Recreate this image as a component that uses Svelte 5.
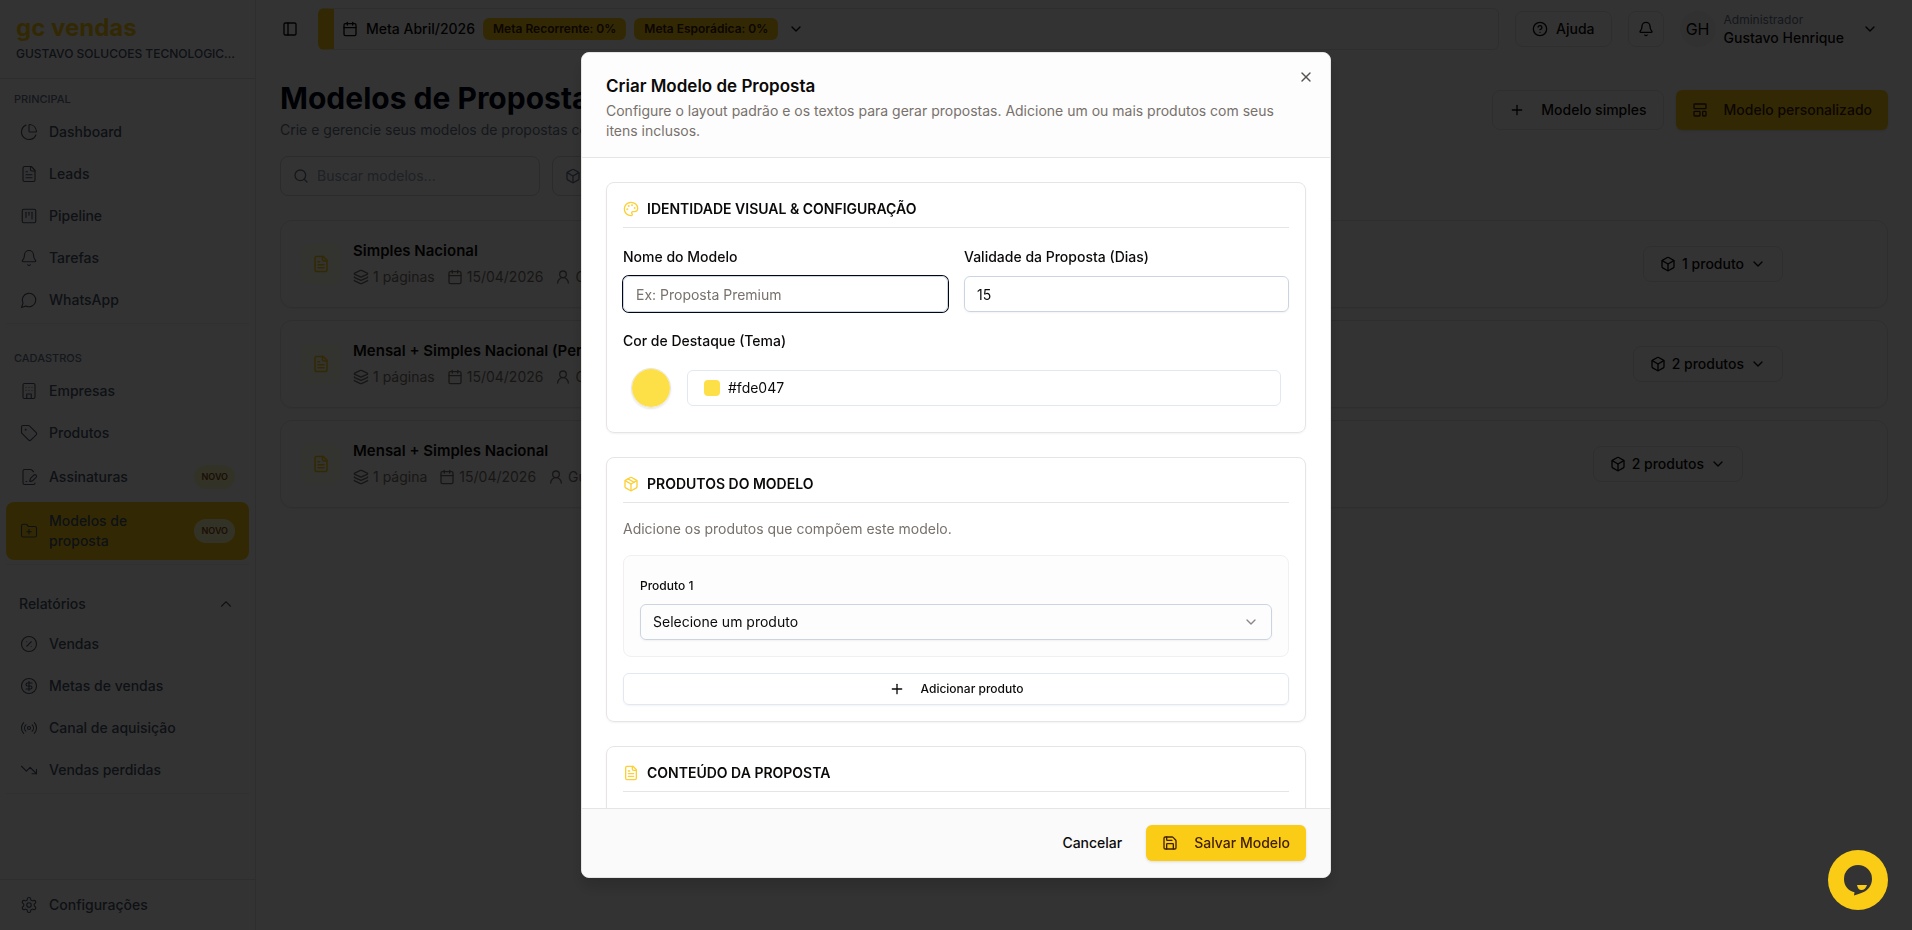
<script lang="ts">
  interface NavItem {
    label: string;
    icon: string;
    badge?: boolean;
    active?: boolean;
  }

  interface Template {
    name: string;
    pages: string;
    date: string;
    author: string;
    products: string;
    actions: string[];
  }

  const icons: Record<string, string> = {
    pie: '<path d="M21 12c.552 0 1.005-.449.95-.998a10 10 0 0 0-8.953-8.951c-.55-.055-.998.398-.998.95v8a1 1 0 0 0 1 1z"/><path d="M21.21 15.89A10 10 0 1 1 8 2.83"/>',
    file: '<path d="M15 2H6a2 2 0 0 0-2 2v16a2 2 0 0 0 2 2h12a2 2 0 0 0 2-2V7Z"/><path d="M14 2v4a2 2 0 0 0 2 2h4"/><path d="M10 9H8"/><path d="M16 13H8"/><path d="M16 17H8"/>',
    kanban: '<rect width="18" height="18" x="3" y="3" rx="2"/><path d="M8 7v7"/><path d="M12 7v4"/><path d="M16 7v9"/>',
    bell: '<path d="M10.268 21a2 2 0 0 0 3.464 0"/><path d="M3.262 15.326A1 1 0 0 0 4 17h16a1 1 0 0 0 .74-1.673C19.41 13.956 18 12.499 18 8A6 6 0 0 0 6 8c0 4.499-1.411 5.956-2.738 7.326"/>',
    message: '<path d="M7.9 20A9 9 0 1 0 4 16.1L2 22Z"/>',
    building: '<rect width="16" height="20" x="4" y="2" rx="2"/><path d="M9 22v-6h6v6"/><path d="M8 7h.01M12 7h.01M16 7h.01M8 11h.01M12 11h.01M16 11h.01"/>',
    tag: '<path d="M12.586 2.586A2 2 0 0 0 11.172 2H4a2 2 0 0 0-2 2v7.172a2 2 0 0 0 .586 1.414l8.704 8.704a2.426 2.426 0 0 0 3.42 0l6.58-6.58a2.426 2.426 0 0 0 0-3.42z"/><circle cx="7.5" cy="7.5" r=".5" fill="currentColor"/>',
    filePen: '<path d="m18 5-2.414-2.414A2 2 0 0 0 14.172 2H6a2 2 0 0 0-2 2v16a2 2 0 0 0 2 2h12a2 2 0 0 0 2-2"/><path d="M21.378 12.626a1 1 0 0 0-3.004-3.004l-4.01 4.012a2 2 0 0 0-.506.854l-.837 2.87a.5.5 0 0 0 .62.62l2.87-.837a2 2 0 0 0 .854-.506z"/><path d="M8 18h1"/>',
    folderPlus: '<path d="M12 10v6"/><path d="M9 13h6"/><path d="M20 20a2 2 0 0 0 2-2V8a2 2 0 0 0-2-2h-7.9a2 2 0 0 1-1.69-.9L9.6 3.9A2 2 0 0 0 7.93 3H4a2 2 0 0 0-2 2v13a2 2 0 0 0 2 2Z"/>',
    percent: '<circle cx="12" cy="12" r="10"/><path d="m15 9-6 6"/><path d="M9 9h.01"/><path d="M15 15h.01"/>',
    dollar: '<circle cx="12" cy="12" r="10"/><path d="M16 8h-6a2 2 0 1 0 0 4h4a2 2 0 1 1 0 4H8"/><path d="M12 18V6"/>',
    radio: '<path d="M4.9 19.1C1 15.2 1 8.8 4.9 4.9"/><path d="M7.8 16.2c-2.3-2.3-2.3-6.1 0-8.5"/><circle cx="12" cy="12" r="2"/><path d="M16.2 7.8c2.3 2.3 2.3 6.1 0 8.5"/><path d="M19.1 4.9C23 8.8 23 15.1 19.1 19"/>',
    trendDown: '<path d="M16 17h6v-6"/><path d="m22 17-8.5-8.5-5 5L2 7"/>',
    settings: '<path d="M12.22 2h-.44a2 2 0 0 0-2 2v.18a2 2 0 0 1-1 1.73l-.43.25a2 2 0 0 1-2 0l-.15-.08a2 2 0 0 0-2.73.73l-.22.38a2 2 0 0 0 .73 2.73l.15.1a2 2 0 0 1 1 1.72v.51a2 2 0 0 1-1 1.74l-.15.09a2 2 0 0 0-.73 2.73l.22.38a2 2 0 0 0 2.73.73l.15-.08a2 2 0 0 1 2 0l.43.25a2 2 0 0 1 1 1.73V20a2 2 0 0 0 2 2h.44a2 2 0 0 0 2-2v-.18a2 2 0 0 1 1-1.73l.43-.25a2 2 0 0 1 2 0l.15.08a2 2 0 0 0 2.73-.73l.22-.39a2 2 0 0 0-.73-2.73l-.15-.08a2 2 0 0 1-1-1.74v-.5a2 2 0 0 1 1-1.74l.15-.09a2 2 0 0 0 .73-2.73l-.22-.38a2 2 0 0 0-2.73-.73l-.15.08a2 2 0 0 1-2 0l-.43-.25a2 2 0 0 1-1-1.73V4a2 2 0 0 0-2-2z"/><circle cx="12" cy="12" r="3"/>',
    panel: '<rect width="18" height="18" x="3" y="3" rx="2"/><path d="M9 3v18"/>',
    calendar: '<path d="M8 2v4"/><path d="M16 2v4"/><rect width="18" height="18" x="3" y="4" rx="2"/><path d="M3 10h18"/>',
    chevronDown: '<path d="m6 9 6 6 6-6"/>',
    chevronUp: '<path d="m18 15-6-6-6 6"/>',
    help: '<circle cx="12" cy="12" r="10"/><path d="M9.09 9a3 3 0 0 1 5.83 1c0 2-3 3-3 3"/><path d="M12 17h.01"/>',
    plus: '<path d="M5 12h14"/><path d="M12 5v14"/>',
    template: '<rect width="18" height="7" x="3" y="3" rx="1"/><rect width="9" height="7" x="3" y="14" rx="1"/><rect width="5" height="7" x="16" y="14" rx="1"/>',
    box: '<path d="M21 8a2 2 0 0 0-1-1.73l-7-4a2 2 0 0 0-2 0l-7 4A2 2 0 0 0 3 8v8a2 2 0 0 0 1 1.73l7 4a2 2 0 0 0 2 0l7-4A2 2 0 0 0 21 16Z"/><path d="m3.3 7 8.7 5 8.7-5"/><path d="M12 22V12"/>',
    package: '<path d="M21 8a2 2 0 0 0-1-1.73l-7-4a2 2 0 0 0-2 0l-7 4A2 2 0 0 0 3 8v8a2 2 0 0 0 1 1.73l7 4a2 2 0 0 0 2 0l7-4A2 2 0 0 0 21 16Z"/><path d="m3.3 7 8.7 5 8.7-5"/><path d="M12 22V12"/><path d="m7.5 4.27 9 5.15"/>',
    layers: '<path d="M12.83 2.18a2 2 0 0 0-1.66 0L2.6 6.08a1 1 0 0 0 0 1.83l8.58 3.91a2 2 0 0 0 1.66 0l8.58-3.9a1 1 0 0 0 0-1.83z"/><path d="M2 12a1 1 0 0 0 .58.91l8.6 3.91a2 2 0 0 0 1.65 0l8.58-3.9A1 1 0 0 0 22 12"/><path d="M2 17a1 1 0 0 0 .58.91l8.6 3.91a2 2 0 0 0 1.65 0l8.58-3.9A1 1 0 0 0 22 17"/>',
    user: '<circle cx="12" cy="8" r="5"/><path d="M20 21a8 8 0 0 0-16 0"/>',
    search: '<circle cx="11" cy="11" r="8"/><path d="m21 21-4.3-4.3"/>',
    palette: '<path d="M12 22a1 1 0 0 1 0-20 10 9 0 0 1 10 9 5 5 0 0 1-5 5h-2.25a1.75 1.75 0 0 0-1.4 2.8l.3.4a1.75 1.75 0 0 1-1.4 2.8z"/><circle cx="13.5" cy="6.5" r=".5" fill="currentColor"/><circle cx="17.5" cy="10.5" r=".5" fill="currentColor"/><circle cx="6.5" cy="12.5" r=".5" fill="currentColor"/><circle cx="8.5" cy="7.5" r=".5" fill="currentColor"/>',
    save: '<path d="M15.2 3a2 2 0 0 1 1.4.6l3.8 3.8a2 2 0 0 1 .6 1.4V19a2 2 0 0 1-2 2H5a2 2 0 0 1-2-2V5a2 2 0 0 1 2-2z"/><path d="M17 21v-7a1 1 0 0 0-1-1H8a1 1 0 0 0-1 1v7"/><path d="M7 3v4a1 1 0 0 0 1 1h7"/>',
    close: '<path d="M18 6 6 18"/><path d="m6 6 12 12"/>'
  };

  const mainNav: NavItem[] = [
    { label: 'Dashboard', icon: 'pie' },
    { label: 'Leads', icon: 'file' },
    { label: 'Pipeline', icon: 'kanban' },
    { label: 'Tarefas', icon: 'bell' },
    { label: 'WhatsApp', icon: 'message' }
  ];

  const recordsNav: NavItem[] = [
    { label: 'Empresas', icon: 'building' },
    { label: 'Produtos', icon: 'tag' },
    { label: 'Assinaturas', icon: 'filePen', badge: true },
    { label: 'Modelos de proposta', icon: 'folderPlus', badge: true, active: true }
  ];

  const reportsNav: NavItem[] = [
    { label: 'Vendas', icon: 'percent' },
    { label: 'Metas de vendas', icon: 'dollar' },
    { label: 'Canal de aquisição', icon: 'radio' },
    { label: 'Vendas perdidas', icon: 'trendDown' }
  ];

  const templates: Template[] = [
    { name: 'Simples Nacional', pages: '1 páginas', date: '15/04/2026', author: 'Gustavo', products: '1 produto', actions: ['filePen', 'close'] },
    { name: 'Mensal + Simples Nacional (Personalizado)', pages: '1 páginas', date: '15/04/2026', author: 'Gustavo', products: '2 produtos', actions: ['filePen', 'close'] },
    { name: 'Mensal + Simples Nacional', pages: '1 página', date: '15/04/2026', author: 'Gustavo', products: '2 produtos', actions: ['file', 'filePen', 'close'] }
  ];

  let modelName = $state('');
  let validity = $state('15');
  let themeColor = $state('#fde047');
  let product = $state('');
</script>

{#snippet icon(name: string, size = 16, stroke = 2)}
  <svg width={size} height={size} viewBox="0 0 24 24" fill="none" stroke="currentColor" stroke-width={stroke} stroke-linecap="round" stroke-linejoin="round" aria-hidden="true">
    {@html icons[name]}
  </svg>
{/snippet}

{#snippet navList(items: NavItem[])}
  <ul class="nav-list">
    {#each items as item}
      <li>
        <a href="#nav" class="nav-item" class:active={item.active}>
          {@render icon(item.icon, 18, 1.5)}
          <span class="nav-label">{item.label}</span>
          {#if item.badge}<span class="novo">NOVO</span>{/if}
        </a>
      </li>
    {/each}
  </ul>
{/snippet}

<div class="app">
  <aside class="sidebar">
    <div class="brand">
      <div class="logo">gc vendas</div>
      <div class="company">GUSTAVO SOLUCOES TECNOLOGICAS LTDA</div>
    </div>

    <nav class="nav">
      <div class="group">
        <h2 class="group-title">PRINCIPAL</h2>
        {@render navList(mainNav)}
      </div>
      <div class="group records">
        <h2 class="group-title">CADASTROS</h2>
        {@render navList(recordsNav)}
      </div>
      <div class="group reports">
        <button class="reports-toggle">Relatórios {@render icon('chevronUp', 18, 1.5)}</button>
        {@render navList(reportsNav)}
      </div>
    </nav>

    <div class="sidebar-footer">
      <a href="#config" class="nav-item">
        {@render icon('settings', 18, 1.5)}
        <span class="nav-label">Configurações</span>
      </a>
    </div>
  </aside>

  <div class="page">
    <header class="topbar">
      <button class="toggle" aria-label="Recolher menu">{@render icon('panel')}</button>
      <div class="goal">
        {@render icon('calendar')}
        <span class="goal-name">Meta Abril/2026</span>
        <span class="goal-badge">Meta Recorrente: 0%</span>
        <span class="goal-badge">Meta Esporádica: 0%</span>
        <span class="goal-arrow">{@render icon('chevronDown')}</span>
      </div>
      <button class="outline help">{@render icon('help')} Ajuda</button>
      <button class="outline square" aria-label="Notificações">{@render icon('bell')}</button>
      <button class="user">
        <span class="avatar">GH</span>
        <span class="user-text">
          <span class="role">Administrador</span>
          <span class="user-name">Gustavo Henrique</span>
        </span>
        {@render icon('chevronDown')}
      </button>
    </header>

    <main class="content">
      <div class="heading">
        <div>
          <h1>Modelos de Proposta</h1>
          <p>Crie e gerencie seus modelos de propostas comerciais.</p>
        </div>
        <div class="heading-actions">
          <button class="outline large">{@render icon('plus')} Modelo simples</button>
          <button class="primary large">{@render icon('template')} Modelo personalizado</button>
        </div>
      </div>

      <div class="filters">
        <label class="search">
          {@render icon('search')}
          <input type="text" placeholder="Buscar modelos..." aria-label="Buscar modelos" />
        </label>
        <button class="filter">{@render icon('box')} Todos os produtos</button>
      </div>

      <div class="templates">
        {#each templates as template}
          <article class="template">
            <span class="tile">{@render icon('file', 18)}</span>
            <div class="template-info">
              <h3>{template.name}</h3>
              <div class="meta">
                <span>{@render icon('layers')} {template.pages}</span>
                <span>{@render icon('calendar')} {template.date}</span>
                <span>{@render icon('user')} {template.author}</span>
              </div>
            </div>
            <button class="outline products">
              {@render icon('box')} {template.products} {@render icon('chevronDown')}
            </button>
            <!-- shown on hover -->
            <div class="row-actions">
              {#each template.actions as action}
                <button aria-label="Ação">{@render icon(action)}</button>
              {/each}
            </div>
          </article>
        {/each}
      </div>
    </main>
  </div>
</div>

<div class="overlay">
  <div class="modal" role="dialog" aria-modal="true" aria-labelledby="modal-title">
    <header class="modal-header">
      <h2 id="modal-title">Criar Modelo de Proposta</h2>
      <p>Configure o layout padrão e os textos para gerar propostas. Adicione um ou mais produtos com seus itens inclusos.</p>
      <button class="close" aria-label="Fechar">{@render icon('close')}</button>
    </header>

    <div class="modal-body">
      <section class="panel">
        <h3 class="panel-title">{@render icon('palette')} IDENTIDADE VISUAL &amp; CONFIGURAÇÃO</h3>
        <div class="columns">
          <div class="field">
            <label for="model-name">Nome do Modelo</label>
            <input id="model-name" class="input focused" type="text" placeholder="Ex: Proposta Premium" bind:value={modelName} />
          </div>
          <div class="field">
            <label for="validity">Validade da Proposta (Dias)</label>
            <input id="validity" class="input" type="text" inputmode="numeric" bind:value={validity} />
          </div>
        </div>
        <div class="field">
          <label for="theme">Cor de Destaque (Tema)</label>
          <div class="color-row">
            <input id="theme" class="color-circle" type="color" bind:value={themeColor} />
            <div class="color-box">
              <span class="swatch" style="background: {themeColor}"></span>
              <input type="text" aria-label="Código da cor" bind:value={themeColor} />
            </div>
          </div>
        </div>
      </section>

      <section class="panel">
        <h3 class="panel-title">{@render icon('package')} PRODUTOS DO MODELO</h3>
        <p class="hint">Adicione os produtos que compõem este modelo.</p>
        <div class="product">
          <div class="field">
            <label class="small" for="product">Produto 1</label>
            <div class="select-wrap">
              <select id="product" class="input" bind:value={product}>
                <option value="">Selecione um produto</option>
              </select>
              {@render icon('chevronDown')}
            </div>
          </div>
        </div>
        <button class="add">{@render icon('plus')} Adicionar produto</button>
      </section>

      <section class="panel">
        <h3 class="panel-title">{@render icon('file')} CONTEÚDO DA PROPOSTA</h3>
        <div class="field"></div>
      </section>
    </div>

    <footer class="modal-footer">
      <button class="ghost">Cancelar</button>
      <button class="primary save">{@render icon('save')} Salvar Modelo</button>
    </footer>
  </div>
</div>

<button class="chat" aria-label="Abrir chat">
  <svg width="32" height="32" viewBox="0 0 32 32" aria-hidden="true">
    <path d="M16 1a14 14 0 0 1 14 14c0 7-5 12.500-12 14.500q-3 1-6 2l.5-3.200C6 27 2 21.500 2 15A14 14 0 0 1 16 1z" fill="#333" />
    <path d="M15 21h10c-1 3-3 5-5.500 5S15.500 24 15 21z" fill="#facc15" />
  </svg>
</button>

<style>
  :global(body) {
    background: #fff;
    font-family: Inter, 'Liberation Sans', sans-serif;
    font-size: 14px;
    line-height: 20px;
    color: #0c0a09;
    overflow: hidden;
  }

  *,
  *::before,
  *::after {
    box-sizing: border-box;
  }

  h1,
  h2,
  h3,
  p,
  ul {
    margin: 0;
    padding: 0;
  }

  button,
  input,
  select {
    font: inherit;
    color: inherit;
    margin: 0;
  }

  button {
    display: inline-flex;
    align-items: center;
    justify-content: center;
    border: 0;
    padding: 0;
    background: none;
    font-weight: 500;
    white-space: nowrap;
    cursor: pointer;
  }

  svg {
    flex: none;
    display: block;
  }

  .app {
    display: flex;
    height: 100vh;
  }

  /* Sidebar */
  .sidebar {
    display: flex;
    flex-direction: column;
    width: 256px;
    flex: none;
    border-right: 1px solid #e7e5e4;
    color: #475569;
  }

  .brand {
    padding: 12px 16px;
    height: 79px;
    border-bottom: 1px solid #e2e2e2;
  }

  .logo {
    font-size: 24px;
    line-height: 32px;
    font-weight: 700;
    color: #facc15;
  }

  .company {
    overflow: hidden;
    text-overflow: ellipsis;
    white-space: nowrap;
    font-size: 12px;
    font-weight: 500;
  }

  .nav {
    flex: 1;
  }

  .group {
    margin: 0 6px;
    padding: 10px 0 4px;
    border-bottom: 1px solid #efefef;
  }

  .group.records {
    padding-top: 24px;
  }

  .group.reports {
    padding-top: 20px;
  }

  .group-title {
    padding: 0 8px;
    margin-bottom: 4px;
    font-size: 11px;
    line-height: 20px;
    font-weight: 500;
    color: #64748b;
  }

  .nav-list {
    display: flex;
    flex-direction: column;
    gap: 4px;
    list-style: none;
  }

  .nav-item {
    display: flex;
    align-items: center;
    gap: 11px;
    padding: 9px 14px;
    border-radius: 8px;
    font-weight: 500;
    color: inherit;
    text-decoration: none;
  }

  .nav-item.active {
    background: #facc15;
  }

  .nav-label {
    flex: 1;
  }

  .novo {
    padding: 0 7px;
    border-radius: 12px;
    font-size: 9px;
    line-height: 24px;
    font-weight: 600;
    color: #854d0e;
    background: #fef9c3;
  }

  .reports-toggle {
    display: flex;
    justify-content: space-between;
    width: 100%;
    height: 38px;
    padding: 0 14px 0 13px;
    margin-bottom: 2px;
  }

  .sidebar-footer {
    padding: 6px;
    border-top: 1px solid #e7e5e4;
  }

  /* Top bar */
  .page {
    flex: 1;
    min-width: 0;
  }

  .topbar {
    display: flex;
    align-items: center;
    height: 58px;
    gap: 16px;
    padding: 0 24px 0 22px;
  }

  .toggle {
    width: 24px;
    height: 24px;
  }

  .goal {
    flex: 1;
    display: flex;
    align-items: center;
    gap: 8px;
    height: 42px;
    padding-left: 8px;
    border: 1px solid #e7e5e4;
    border-left: 16px solid #facc15;
    border-radius: 6px;
  }

  .goal-name {
    font-weight: 500;
  }

  .goal-badge {
    padding: 0 10px;
    border-radius: 6px;
    font-size: 12px;
    line-height: 22px;
    font-weight: 600;
    color: #422006;
    background: #facc15;
  }

  .goal-arrow {
    padding-left: 2px;
  }

  .outline {
    border: 1px solid #e7e5e4;
    border-radius: 8px;
    height: 36px;
    padding: 0 16px;
    gap: 8px;
  }

  .outline.square {
    width: 36px;
    padding: 0;
  }

  .outline.products {
    gap: 6px;
  }

  .user {
    gap: 8px;
    padding-right: 10px;
  }

  .user > :global(svg) {
    margin-left: 10px;
  }

  .avatar {
    width: 36px;
    border-radius: 50%;
    font-size: 16px;
    line-height: 36px;
    font-weight: 400;
    background: #f5f5f4;
  }

  .user-text {
    display: flex;
    flex-direction: column;
    text-align: left;
    line-height: 18px;
  }

  .role {
    font-size: 12px;
    font-weight: 400;
    color: #64748b;
  }

  /* Templates page */
  .content {
    padding: 22px 24px;
  }

  .heading {
    display: flex;
    align-items: center;
    justify-content: space-between;
    margin-bottom: 16px;
  }

  h1 {
    margin-bottom: 4px;
    font-size: 30px;
    line-height: 36px;
    font-weight: 700;
    color: #020617;
  }

  .heading p {
    color: #64748b;
  }

  .heading-actions {
    display: flex;
    gap: 12px;
  }

  .primary {
    border-radius: 6px;
    padding: 0 16px;
    gap: 16px;
    color: #422006;
    background: #facc15;
    box-shadow: 0 1px 3px rgba(0, 0, 0, 0.12);
  }

  .large {
    height: 40px;
    gap: 16px;
  }

  .filters {
    display: flex;
    gap: 12px;
    margin-bottom: 24px;
  }

  .search,
  .filter {
    display: flex;
    align-items: center;
    height: 40px;
    padding: 0 12px;
    border: 1px solid #cbd5e1;
    border-radius: 8px;
    gap: 8px;
    color: #64748b;
  }

  .search {
    width: 260px;
  }

  .search input {
    min-width: 0;
    flex: 1;
    padding: 0;
    border: 0;
    outline: 0;
    background: none;
  }

  .search input::placeholder {
    color: #94a3b8;
  }

  .templates {
    display: flex;
    flex-direction: column;
    gap: 12px;
  }

  .template {
    display: flex;
    align-items: center;
    height: 88px;
    padding: 0 20px;
    border: 1px solid #e7e5e4;
    border-radius: 12px;
    box-shadow: 0 1px 2px rgba(0, 0, 0, 0.06);
  }

  .tile {
    display: flex;
    align-items: center;
    justify-content: center;
    width: 40px;
    height: 40px;
    margin-right: 12px;
    border-radius: 8px;
    color: #facc15;
    background: #fefce8;
  }

  .template-info {
    flex: 1;
  }

  h3 {
    font-size: 15px;
    line-height: 24px;
    font-weight: 600;
  }

  .template-info h3 {
    margin-bottom: 2px;
  }

  .meta {
    display: flex;
    gap: 12px;
    line-height: 24px;
    color: #78716c;
  }

  .meta span {
    display: flex;
    align-items: center;
    gap: 4px;
  }

  .row-actions {
    display: flex;
    gap: 4px;
    margin-left: 8px;
    opacity: 0;
  }

  .row-actions button {
    width: 36px;
    height: 36px;
  }

  /* Modal */
  .overlay {
    position: fixed;
    inset: 0;
    display: flex;
    align-items: center;
    justify-content: center;
    background: rgba(0, 0, 0, 0.8);
  }

  .modal {
    position: relative;
    display: flex;
    flex-direction: column;
    width: 750px;
    max-width: 100%;
    max-height: calc(100vh - 104px);
    overflow: hidden;
    border: 1px solid #e7e5e4;
    border-radius: 8px;
    background: #fff;
    box-shadow: 0 10px 15px rgba(0, 0, 0, 0.15);
  }

  .modal-header {
    flex: none;
    padding: 24px 24px 16px;
    border-bottom: 1px solid #e7e5e4;
    background: #fdfdfd;
  }

  .modal-header h2 {
    margin-bottom: 6px;
    font-size: 17px;
    line-height: 18px;
    font-weight: 600;
  }

  .modal-header p,
  .hint {
    color: #78716c;
  }

  .close {
    position: absolute;
    top: 16px;
    right: 16px;
    color: #57534e;
  }

  .modal-body {
    flex: 1;
    min-height: 0;
    display: flex;
    flex-direction: column;
    gap: 24px;
    padding: 24px 24px 0;
    overflow: hidden;
  }

  .panel {
    flex: none;
    display: flex;
    flex-direction: column;
    gap: 16px;
    padding: 16px;
    border: 1px solid #e7e5e4;
    border-radius: 8px;
    box-shadow: 0 1px 2px rgba(0, 0, 0, 0.05);
  }

  .panel-title {
    display: flex;
    align-items: center;
    gap: 8px;
    padding-bottom: 8px;
    border-bottom: 1px solid #e7e5e4;
    font-size: 14px;
    line-height: 20px;
  }

  .panel-title > :global(svg) {
    color: #fcd034;
  }

  .columns {
    display: grid;
    grid-template-columns: 1fr 1fr;
    gap: 16px;
  }

  .field {
    display: flex;
    flex-direction: column;
    gap: 8px;
    min-height: 36px;
  }

  .field label {
    padding-top: 2px;
    line-height: 22px;
    font-weight: 500;
  }

  .field label.small {
    padding-top: 4px;
    font-size: 12px;
    line-height: 20px;
  }

  .input {
    width: 100%;
    height: 36px;
    padding: 0 12px;
    border: 1px solid #cbd5e1;
    border-radius: 6px;
    outline: 0;
    background: transparent;
    box-shadow: 0 1px 2px rgba(0, 0, 0, 0.05);
  }

  .input::placeholder {
    color: #78716c;
  }

  .input.focused {
    box-shadow: 0 0 0 1px #020617;
  }

  .color-row {
    display: flex;
    align-items: center;
    gap: 16px;
    padding: 8px;
  }

  .color-circle {
    appearance: none;
    width: 40px;
    height: 40px;
    padding: 0;
    border: 1px solid #e7e5e4;
    border-radius: 50%;
    overflow: hidden;
    background: none;
    box-shadow: 0 1px 2px rgba(0, 0, 0, 0.1);
  }

  .color-circle::-webkit-color-swatch-wrapper {
    padding: 0;
  }

  .color-circle::-webkit-color-swatch {
    border: 0;
  }

  .color-box {
    flex: 1;
    display: flex;
    align-items: center;
    gap: 8px;
    height: 36px;
    padding: 0 16px;
    border: 1px solid #e2e8f0;
    border-radius: 6px;
  }

  .color-box input {
    flex: 1;
    min-width: 0;
    padding: 0;
    border: 0;
    outline: 0;
    background: none;
  }

  .swatch {
    width: 16px;
    height: 16px;
    border-radius: 4px;
  }

  .product {
    padding: 16px;
    border: 1px solid #f1f0ef;
    border-radius: 8px;
    background: #fdfdfd;
  }

  .select-wrap {
    position: relative;
  }

  select.input {
    display: block;
    appearance: none;
  }

  .select-wrap > :global(svg) {
    position: absolute;
    top: 10px;
    right: 13px;
    color: #8a8785;
    pointer-events: none;
  }

  .add {
    height: 32px;
    gap: 16px;
    border: 1px solid #e2e8f0;
    border-radius: 6px;
    font-size: 12px;
    box-shadow: 0 1px 2px rgba(0, 0, 0, 0.05);
  }

  .modal-footer {
    flex: none;
    display: flex;
    justify-content: flex-end;
    gap: 8px;
    padding: 16px 24px;
    border-top: 1px solid #e7e5e4;
    background: #fafafa;
  }

  .ghost {
    height: 36px;
    padding: 0 16px;
  }

  .save {
    height: 36px;
  }

  .chat {
    position: fixed;
    right: 24px;
    bottom: 20px;
    width: 60px;
    height: 60px;
    border-radius: 50%;
    background: #facc15;
  }
</style>
